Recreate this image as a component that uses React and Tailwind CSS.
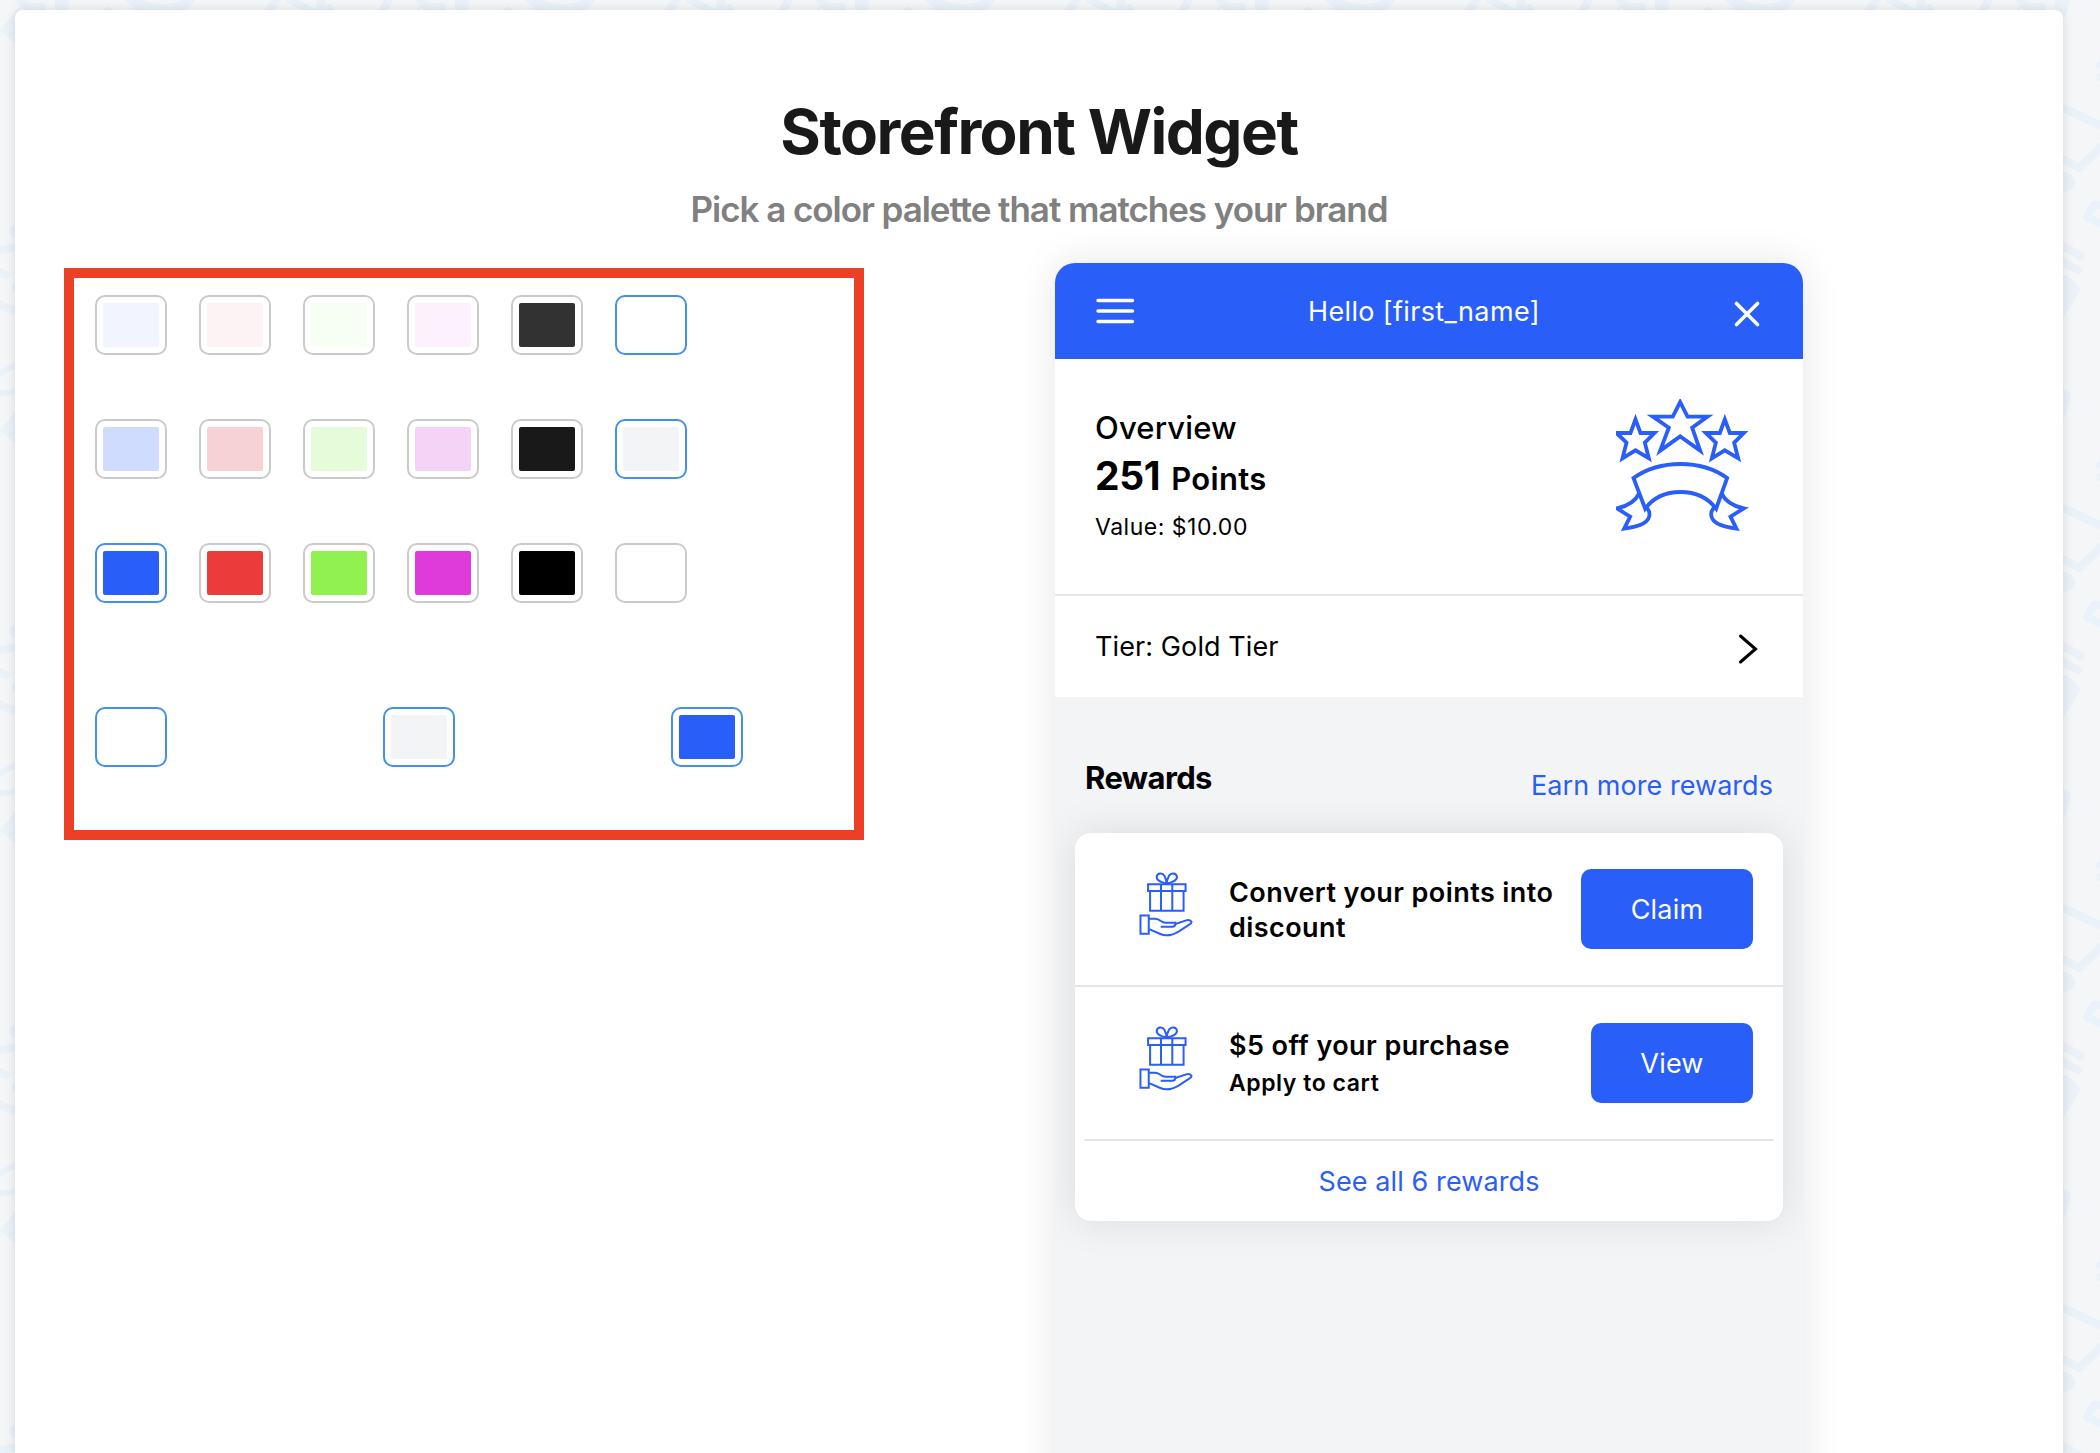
import React, { useState } from 'react';

const swatchRows = [
  ['bg-[#f2f5ff]', 'bg-[#fdf2f4]', 'bg-[#f7fef3]', 'bg-[#fcf1fc]', 'bg-[#323232]', 'bg-white'],
  ['bg-[#d0dcfd]', 'bg-[#f6d2d6]', 'bg-[#e5fbda]', 'bg-[#f4d3f6]', 'bg-[#191919]', 'bg-[#f3f4f6]'],
  ['bg-[#295ef8]', 'bg-[#eb3b3b]', 'bg-[#91f151]', 'bg-[#df3bda]', 'bg-black', 'bg-white'],
];

const Swatch = ({ color, active, onClick }) => (
  <button
    type="button"
    onClick={onClick}
    className={`flex h-[60px] w-[72px] items-center justify-center rounded-[10px] border-2 bg-white ${active ? 'border-[#428fec]' : 'border-[#cacaca]'}`}
  >
    <span className={`h-11 w-14 rounded-[2px] ${color}`} />
  </button>
);

const Backdrop = () => (
  <svg className="absolute inset-0 h-full w-full" aria-hidden="true">
    <defs>
      <pattern id="doodles" width="400" height="400" patternUnits="userSpaceOnUse">
        <g fill="none" stroke="#ebf1f8" strokeWidth="8" strokeLinecap="round" strokeLinejoin="round">
          <path d="M40 98L63 108L102 126M40 149L63 159L79 168L102 146" />
          <path d="M104 205H94L87 217L104 225" />
          <path d="M104 60L98 65L103 68M99 76L103 82" strokeWidth="5" />
          <path d="M55 242L81 256M55 257L78 270" />
          <path d="M-6 377Q6 370 24 361M-6 391Q8 396 22 388" strokeWidth="6" />
          <path d="M-4 250Q6 250 20 246M-4 270L6 275M-4 303L24 315" />
          <path d="M18 -4Q24 12 42 6V12M66 -2L63 12M278 -2L268 12M288 -2L312 12M322 -2L319 12M390 -2L380 14" />
        </g>
        <g fill="#ebf1f8">
          <circle cx="65" cy="182" r="10" />
          <circle cx="15" cy="231" r="6" />
          <circle cx="18" cy="287" r="6" />
          <circle cx="329" cy="9" r="5" />
          <circle cx="108" cy="12" r="5" />
          <path d="M20 6L0 30L20 48Z" />
          <path d="M55 276H68L81 289L63 319H55Z" />
          <path d="M55 384L71 394L64 420H55ZM55 -16L71 -6L64 18H55Z" />
          <path d="M125 0H143Q162 8 182 0H195L184 12H138Z" />
        </g>
      </pattern>
    </defs>
    <rect width="100%" height="100%" fill="url(#doodles)" />
  </svg>
);

const RibbonTail = () => (
  <path d="M147 340Q130 375 80 385L120 410L102 446Q178 437 178 403Q178 388 165 382" />
);

const BadgeIcon = () => (
  <svg viewBox="78 57 398 396" className="h-[132px] w-[133px]" fill="none" stroke="#295ef8" strokeWidth="11.5" strokeMiterlimit="10">
    <path d="M270 66L292 110H352L306 143L330 212L270 169L210 212L236 143L188 110H248Z" />
    <path d="M136 118L151 159H193L164 188L176 235L136 211L97 235L109 188L79 159H121Z" />
    <path d="M404 118L419 159H461L432 188L444 235L404 211L365 235L377 188L347 159H389Z" />
    <path d="M130 294Q190 252 271 252Q352 252 411 294L378 386Q340 336 271 336Q202 336 165 386Z" />
    <RibbonTail />
    <g transform="translate(541 0) scale(-1 1)"><RibbonTail /></g>
  </svg>
);

const GiftIcon = () => (
  <svg viewBox="58 64 162 196" className="mb-[10px] h-[65px] w-[54px] shrink-0" fill="none" stroke="#295ef8" strokeWidth="6">
    <path d="M141 99C128 96 110 92 111 78C113 66 129 66 134 75C138 82 140 90 141 99C142 90 144 82 148 75C154 66 170 66 172 78C173 92 154 96 141 99Z" />
    <path d="M85 101H198V121H85ZM91 121V181H192V121M124 101V181M158 101V181" />
    <path d="M62 195H87V250H62ZM88 205H106Q116 206 122 211Q130 217 138 217H167V222Q166 229 158 229H123" />
    <path d="M167 221L200 210Q210 207 216 214Q216 219 210 222L178 243Q147 262 122 251L88 236" />
  </svg>
);

const RewardRow = ({ title, note, action, buttonClass }) => (
  <div className="flex h-[152px] items-center pr-[30px] pl-16">
    <GiftIcon />
    <div className="ml-9 flex-1 pt-[2px] font-semibold">
      <p className="w-[335px] text-[27px] leading-[35px] tracking-[0.42px]">{title}</p>
      {note && <p className="pt-[2px] text-[23px] leading-[36px] tracking-[0.55px]">{note}</p>}
    </div>
    <button type="button" className={`h-20 rounded-[10px] bg-[#295ef8] pt-[2px] text-[27px] tracking-[0.2px] text-white ${buttonClass}`}>{action}</button>
  </div>
);

const StorefrontPreview = () => (
  <div className="w-[748px] overflow-clip rounded-t-[20px] bg-[#f3f4f6] text-black shadow-[0_0_40px_rgba(0,0,0,0.1)]">
    <header className="flex h-24 items-center bg-[#295ef8] pr-[43px] pl-[41px] text-white">
      <svg width="39" height="26" stroke="currentColor" strokeWidth="3.4" strokeLinecap="round">
        <path d="M2 2.5H36.5M2 13H36.5M2 23.5H36.5" />
      </svg>
      <span className="ml-[173px] pt-[2px] text-[27px] tracking-[0.35px]">Hello [first_name]</span>
      <svg width="26" height="26" className="mt-[5px] ml-auto" stroke="currentColor" strokeWidth="3.6" strokeLinecap="round">
        <path d="M2.5 2.5L23.5 23.5M23.5 2.5L2.5 23.5" />
      </svg>
    </header>

    <section className="flex h-[237px] justify-between border-b-2 border-[#e4e5e6] bg-white pt-10 pr-[54px] pl-10">
      <div className="pt-[9px]">
        <p className="text-[31px] leading-[40px] font-medium tracking-[0.15px]">Overview</p>
        <p className="mt-[3px] text-[31px] leading-[50px] font-semibold tracking-[0.3px]">
          <span className="mr-[3px] text-[39px] font-bold tracking-[-0.4px]">251</span> Points
        </p>
        <p className="mt-[7px] text-[23px] leading-[32px] tracking-[0.5px]">Value: $10.00</p>
      </div>
      <BadgeIcon />
    </section>

    <section className="flex h-[101px] items-center justify-between bg-white pr-[44px] pl-10">
      <span className="pt-[2px] text-[27px] tracking-[0.1px]">Tier: Gold Tier</span>
      <svg width="22" height="32" className="mt-1" fill="none" stroke="currentColor" strokeWidth="3" strokeLinecap="round">
        <path d="M3.5 3L18.5 16L3.5 29" />
      </svg>
    </section>

    <div className="flex h-[136px] items-start justify-between px-[30px] pt-[61px]">
      <h3 className="text-[31px] leading-[40px] font-bold tracking-[-0.6px]">Rewards</h3>
      <a className="mt-[10px] text-[27px] leading-[36px] tracking-[0.05px] text-[#295ef8]">Earn more rewards</a>
    </div>

    <div className="mx-5 rounded-[16px] bg-white shadow-[0_0_40px_rgba(0,0,0,0.1)]">
      <RewardRow title="Convert your points into discount" action="Claim" buttonClass="w-[172px]" />
      <div className="h-[2px] bg-[#e4e5e6]" />
      <RewardRow title="$5 off your purchase" note="Apply to cart" action="View" buttonClass="w-[162px]" />
      <div className="mx-[9px] h-[2px] rounded-b-[2px] bg-[#e4e5e6]" />
      <div className="flex h-20 items-center justify-center pt-[2px] text-[27px] tracking-[0.1px] text-[#295ef8]">See all 6 rewards</div>
    </div>
  </div>
);

const App = () => {
  // one selected column per row: background, surface, accent
  const [selected, setSelected] = useState([5, 5, 0]);

  const pick = (row, col) => setSelected(selected.map((s, i) => (i === row ? col : s)));

  return (
    <div className="relative h-[1453px] w-[2100px] overflow-hidden bg-[#f4f6f8] pt-[10px] pl-[15px] font-['Inter',sans-serif]">
      <Backdrop />
      <main className="relative flex h-[1500px] w-[2048px] flex-col rounded-[8px] bg-white pt-[86px] shadow-[0_0_12px_rgba(0,0,0,0.12)]">
        <h1 className="text-center text-[62px] leading-[72px] font-bold tracking-[-1.5px] text-[#191919]">Storefront Widget</h1>
        <h2 className="mt-[21px] text-center text-[35px] leading-[40px] font-semibold tracking-[-1.05px] text-[#808080]">
          Pick a color palette that matches your brand
        </h2>

        <div className="mt-[34px] flex flex-1 justify-between pr-[260px] pl-[49px]">
          <div className="mt-[5px] h-[572px] w-[800px] border-[10px] border-[#eb4026] pt-[17px] pl-[21px]">
            <div className="flex flex-col gap-16">
              {swatchRows.map((row, r) => (
                <div key={r} className="flex gap-8">
                  {row.map((color, c) => (
                    <Swatch key={c} color={color} active={selected[r] === c} onClick={() => pick(r, c)} />
                  ))}
                </div>
              ))}
            </div>
            <div className="mt-[104px] flex gap-[216px]">
              {swatchRows.map((row, r) => (
                <Swatch key={r} color={row[selected[r]]} active />
              ))}
            </div>
          </div>
          <StorefrontPreview />
        </div>
      </main>
    </div>
  );
};

export default App;
